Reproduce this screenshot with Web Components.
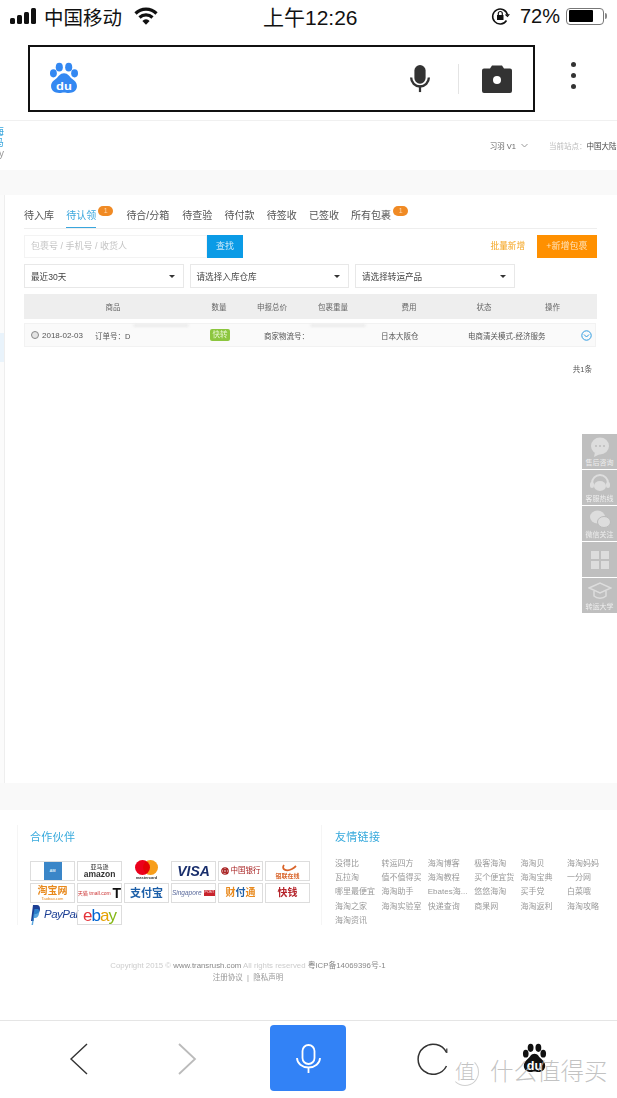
<!DOCTYPE html>
<html lang="zh">
<head>
<meta charset="utf-8">
<title>Transrush</title>
<style>
  html, body { margin: 0; padding: 0; background: #fff; }
  body {
    width: 617px;
    height: 1098px;
    overflow: hidden;
    position: relative;
    font-family: "Liberation Sans", "Noto Sans CJK SC", sans-serif;
    color: #333;
  }
</style>
</head>
<body>
<status-bar></status-bar>
<search-bar></search-bar>
<site-head></site-head>
<package-panel></package-panel>
<site-footer></site-footer>
<side-tools></side-tools>
<browser-bar></browser-bar>

<script>
const PAW = `
  <ellipse cx="8" cy="11" rx="2.9" ry="4"/>
  <ellipse cx="13" cy="5" rx="3" ry="4.2"/>
  <ellipse cx="21" cy="5" rx="3" ry="4.2"/>
  <ellipse cx="26" cy="11" rx="2.9" ry="4"/>
  <path d="M17 11c-3.600 0-4.500 3.300-6.800 5.300C8 18.200 6 20 6 23.500 6 27.500 9 30 13 30c1.700 0 2.800-.5 4-.5s2.300.5 4 .5c4 0 7-2.500 7-6.500 0-3.500-2-5.300-4.200-7.200C21.500 14.300 20.600 11 17 11z"/>`

class StatusBar extends HTMLElement {
  constructor() {
    super()
    this.attachShadow({ mode: 'open' })
    this.shadowRoot.innerHTML = `
      <style>
        :host { display: flex; align-items: center; height: 40px; padding: 0 10px 8px; color: #111; font-size: 20px; box-sizing: border-box; }
        .left, .right { flex: 1; display: flex; align-items: center; }
        .right { justify-content: flex-end; }
        .bars { display: flex; align-items: flex-end; gap: 2px; height: 16px; margin-right: 8px; }
        .bars i { width: 5px; border-radius: 1.500px; background: #111; }
        .carrier { font-size: 19.500px; margin-right: 12px; }
        .time { font-size: 21px; width: 94px; text-align: center; white-space: nowrap; }
        .pct { margin: 0 6px 0 10px; }
        .batt { width: 38px; height: 17px; border: 1.500px solid #777; border-radius: 4px; box-sizing: border-box; padding: 1.500px; }
        .batt i { display: block; width: 74%; height: 100%; background: #000; border-radius: 1px; }
        .nub { width: 2px; height: 6px; background: #888; margin-left: 1px; border-radius: 0 2px 2px 0; }
      </style>
      <div class="left">
        <div class="bars"><i style="height:6px"></i><i style="height:9px"></i><i style="height:12px"></i><i style="height:16px"></i></div>
        <span class="carrier">中国移动</span>
        <svg width="24" height="18" viewBox="0 0 24 18" fill="none" stroke="#111" stroke-width="3.200">
          <path d="M1.500 6.500a15 15 0 0 1 21 0"/><path d="M5.500 10.500a9.500 9.500 0 0 1 13 0"/>
          <path d="M12 17.800l-3.600-3.900a4.800 4.800 0 0 1 7.200 0z" fill="#111" stroke="none"/>
        </svg>
      </div>
      <div class="time">上午12:26</div>
      <div class="right" style="margin-left:-3px">
        <svg width="19" height="19" viewBox="0 0 19 19" fill="none" stroke="#111" stroke-width="1.500">
          <path d="M15.500 13.500A7.500 7.500 0 1 1 16.500 8"/><path d="M14.500 7.500l2 1.800 1.800-2.200" stroke-width="1.200"/>
          <rect x="6" y="8" width="6.500" height="5" fill="#111" stroke="none"/>
          <path d="M7.300 8V6.500a2 2 0 0 1 4 0V8" stroke-width="1.200"/>
        </svg>
        <span class="pct">72%</span>
        <div class="batt"><i></i></div>
        <div class="nub"></div>
      </div>`
  }
}

class SearchBar extends HTMLElement {
  constructor() {
    super()
    this.attachShadow({ mode: 'open' })
    this.shadowRoot.innerHTML = `
      <style>
        :host { display: flex; align-items: flex-start; height: 81px; padding: 5px 0 0 28px; box-sizing: border-box; border-bottom: 1px solid #f0f0f0; }
        .box { width: 507px; height: 67px; box-sizing: border-box; border: 2px solid #111; display: flex; align-items: center; padding: 0 21px 0 14px; }
        .paw { width: 40px; height: 33px; }
        .grow { flex: 1; }
        .sep { width: 1px; height: 30px; background: #e4e4e4; margin: 0 23px 0 27px; }
        .dots { display: flex; flex-direction: column; gap: 6px; margin: 17px 0 0 36px; }
        .dots i { width: 5px; height: 5px; border-radius: 50%; background: #333; }
      </style>
      <div class="box">
        <svg class="paw" viewBox="0 0 34 32" preserveAspectRatio="none" fill="#3388f2">${PAW}
          <text x="17" y="27" text-anchor="middle" font-size="11" font-weight="700" fill="#fff" font-family="Liberation Sans, sans-serif">du</text>
        </svg>
        <div class="grow"></div>
        <svg width="22" height="28" viewBox="0 0 22 30" fill="#333">
          <rect x="5" y="0" width="12" height="20" rx="6"/>
          <path d="M1.500 13.500a9.500 9.500 0 0 0 19 0" fill="none" stroke="#333" stroke-width="2.500"/>
          <rect x="9.800" y="22" width="2.400" height="7"/>
        </svg>
        <div class="sep"></div>
        <svg width="30" height="28" viewBox="0 0 30 28">
          <path d="M0 5.500q0-2 2-2h6l2-3h10l2 3h6q2 0 2 2V26q0 2-2 2H2q-2 0-2-2z" fill="#333"/>
          <circle cx="15" cy="15" r="4" fill="#fff"/>
        </svg>
      </div>
      <div class="dots"><i></i><i></i><i></i></div>`
  }
}

class SiteHead extends HTMLElement {
  constructor() {
    super()
    this.attachShadow({ mode: 'open' })
    this.shadowRoot.innerHTML = `
      <style>
        :host { display: flex; align-items: center; height: 49px; font-size: 7.500px; color: #666; filter: blur(.45px); }
        .logo { width: 4px; height: 36px; overflow: hidden; display: flex; flex-direction: column; align-items: flex-end; color: #3aa6dd; font-size: 10px; line-height: 11px; margin-top: -4px; }
        .user { margin-left: auto; display: flex; align-items: center; gap: 5px; margin-top: 0; }
        .site { margin-left: 21px; white-space: nowrap; width: 68px; }
        .site span { color: #bbb; }
        .site b { font-weight: 400; color: #444; }
        svg { display: block; }
      </style>
      <div class="logo"><span>海</span><span>马</span><span style="color:#999">y</span></div>
      <div class="user">习羽 V1
        <svg width="7" height="5" viewBox="0 0 7 5" fill="none" stroke="#999"><path d="M.500 1l3 3 3-3"/></svg>
      </div>
      <div class="site"><span>当前站点：</span><b>中国大陆</b></div>`
  }
}

class TabItem extends HTMLElement {
  constructor() {
    super()
    this.attachShadow({ mode: 'open' })
  }

  connectedCallback() {
    const badge = this.hasAttribute('badge')
    this.shadowRoot.innerHTML = `
      <style>
        :host { display: flex; align-items: flex-start; height: 33px; box-sizing: border-box; padding-top: 15px; font-size: 10px; line-height: 12px; color: #555; white-space: nowrap; }
        :host([active]) span.t { color: #3aa6dd; border-bottom: 1px solid #3aa6dd; height: 17px; }
        .b { width: 15px; height: 10px; border-radius: 5px; background: #f08a24; color: #ffd9b0; font-size: 7px; line-height: 10px; text-align: center; margin: -4px 0 0 2px; }
      </style>
      <span class="t"><slot></slot></span>${badge ? '<span class="b">1</span>' : ''}`
  }
}

class SelectBox extends HTMLElement {
  constructor() {
    super()
    this.attachShadow({ mode: 'open' })
    this.shadowRoot.innerHTML = `
      <style>
        :host { display: flex; align-items: center; justify-content: space-between; height: 24px; box-sizing: border-box; border: 1px solid #e8e8e8; padding: 0 8px 0 6px; font-size: 8.600px; color: #444; }
        i { border: 3px solid transparent; border-top: 3px solid #333; border-bottom: 0; }
      </style>
      <span><slot></slot></span><i></i>`
  }
}

class PackagePanel extends HTMLElement {
  constructor() {
    super()
    this.attachShadow({ mode: 'open' })
    this.shadowRoot.innerHTML = `
      <style>
        :host { display: flex; height: 640px; background: #f9f9f9; padding: 25px 0 27px; box-sizing: border-box; filter: blur(.45px); font-size: 7.500px; color: #666; }
        .gutter { width: 4px; background: #fbfbfb; border-right: 1px solid #eee; padding-top: 138px; }
        .gutter i { display: block; height: 29px; background: #e9f3fb; }
        .main { flex: 1; background: #fff; padding: 0 20px 0 19px; }
        .tabs { display: flex; gap: 12.200px; height: 33px; border-bottom: 1px solid #eee; }
        .tools { display: flex; align-items: stretch; height: 23px; margin-top: 6px; }
        .input { width: 183px; box-sizing: border-box; border: 1px solid #f3f3f3; color: #c4c4c4; font-size: 9px; line-height: 21px; padding-left: 6px; }
        .go { width: 36px; background: #0b9be6; color: #cdeafa; font-size: 9px; line-height: 23px; text-align: center; }
        .bulk { margin-left: auto; color: #f5a623; font-size: 8.600px; line-height: 23px; }
        .add { width: 60px; margin-left: 12px; background: #ff9000; color: #ffe2b8; font-size: 9px; line-height: 23px; text-align: center; }
        .filters { display: grid; grid-template-columns: 159.500px 159.500px 159.500px; gap: 6px; margin-top: 6px; }
        .thead, .trow { display: grid; grid-template-columns: 178px 34px 72px 50px 102px 48px 1fr; align-items: center; text-align: center; white-space: nowrap; }
        .thead { height: 25px; margin-top: 6px; background: #eee; color: #666; }
        .trow { position: relative; height: 24px; margin: 4px 1px 0 0; background: #fafafa; border: 1px solid #f2f2f2; box-sizing: border-box; color: #555; }
        .goods { display: flex; align-items: center; padding-left: 6px; text-align: left; font-size: 8px; }
        .clock { width: 8px; height: 8px; box-sizing: border-box; border: 1px solid #888; border-radius: 50%; margin-right: 3px; background: #e4e4e4; }
        .order { margin-left: 12px; font-size: 7.500px; }
        .tag { width: 20px; height: 12px; margin: 0 auto; border-radius: 2px; background: #8cc63f; color: #e8f7d2; font-size: 7.500px; line-height: 12px; }
        .mail { grid-column: 3 / 5; padding-left: 27px; text-align: left; }
        .wh { padding-left: 22px; text-align: left; }
        .svc { grid-column: 6 / 8; padding-left: 7px; text-align: left; }
        .chev { position: absolute; right: 3px; top: 6px; }
        .smear { position: absolute; top: 0; height: 3px; background: #ececec; border-radius: 2px; filter: blur(1px); }
        .total { text-align: right; padding: 16px 5px 0 0; color: #555; }
      </style>
      <div class="gutter"><i></i></div>
      <div class="main">
        <div class="tabs">
          <tab-item>待入库</tab-item>
          <tab-item active badge style="margin-right:1px">待认领</tab-item>
          <tab-item style="margin-right:1px">待合/分箱</tab-item>
          <tab-item>待查验</tab-item>
          <tab-item>待付款</tab-item>
          <tab-item>待签收</tab-item>
          <tab-item>已签收</tab-item>
          <tab-item badge>所有包裹</tab-item>
        </div>
        <div class="tools">
          <div class="input">包裹号 / 手机号 / 收货人</div>
          <div class="go">查找</div>
          <div class="bulk">批量新增</div>
          <div class="add">+新增包裹</div>
        </div>
        <div class="filters">
          <select-box>最近30天</select-box>
          <select-box>请选择入库仓库</select-box>
          <select-box>请选择转运产品</select-box>
        </div>
        <div class="thead">
          <span>商品</span><span>数量</span><span>申报总价</span><span>包裹重量</span><span>费用</span><span>状态</span><span>操作</span>
        </div>
        <div class="trow">
          <span class="smear" style="left:108px;width:56px"></span>
          <span class="smear" style="left:285px;width:56px"></span>
          <div class="goods"><i class="clock"></i>2018-02-03<span class="order">订单号：D</span></div>
          <div class="tag">快转</div>
          <div class="mail">商家物流号：</div>
          <div class="wh">日本大阪仓</div>
          <div class="svc">电商清关模式-经济服务</div>
          <svg class="chev" width="11" height="11" viewBox="0 0 11 11" fill="none" stroke="#2d9be0"><circle cx="5.500" cy="5.500" r="4.700"/><path d="M3 4.500l2.500 2.500L8 4.500"/></svg>
        </div>
        <div class="total">共1条</div>
      </div>`
  }
}

class PartnerLogo extends HTMLElement {
  constructor() {
    super()
    this.attachShadow({ mode: 'open' })
    this.shadowRoot.innerHTML = `
      <style>
        :host { display: flex; flex-direction: column; align-items: center; justify-content: center; height: 20px; box-sizing: border-box; border: 1px solid #ddd; overflow: hidden; white-space: nowrap; font-size: 9px; font-weight: 700; line-height: 1; }
        :host([plain]) { border-color: transparent; overflow: visible; }
        :host([row]) { flex-direction: row; gap: 2px; }
      </style>
      <slot></slot>`
  }
}

class SiteFooter extends HTMLElement {
  constructor() {
    super()
    this.attachShadow({ mode: 'open' })
    const links = ['没得比', '转运四方', '海淘博客', '极客海淘', '海淘贝', '海淘妈妈', '瓦拉淘', '值不值得买', '海淘教程', '买个便宜货', '海淘宝典', '一分网', '哪里最便宜', '海淘助手', 'Ebates海...', '悠悠海淘', '买手党', '白菜哦', '海淘之家', '海淘实验室', '快递查询', '商果网', '海淘返利', '海淘攻略', '海淘资讯']
    this.shadowRoot.innerHTML = `
      <style>
        :host { display: block; height: 210px; padding: 15px 0 0 17px; box-sizing: border-box; filter: blur(.45px); }
        .cols { display: flex; height: 100px; }
        .left { width: 304px; padding: 5px 0 0 12px; border-left: 1px solid #f5f5f5; box-sizing: border-box; }
        .right { padding: 5px 0 0 13px; border-left: 1px solid #f5f5f5; width: 280px; box-sizing: border-box; }
        h3 { margin: 0; font-size: 11px; font-weight: 400; line-height: 14px; color: #36a9dc; letter-spacing: .300px; }
        .logos { display: grid; grid-template-columns: repeat(6, 45px); grid-auto-rows: 20px; gap: 2px; margin-top: 17px; }
        .links { display: grid; grid-template-columns: repeat(6, 46.400px); grid-auto-rows: 14.200px; margin-top: 13px; font-size: 8px; line-height: 14px; color: #999; white-space: nowrap; }
        .copy { margin: 35px 0 0 -17px; text-align: center; font-size: 7.800px; line-height: 11.500px; color: #ccc; width: 496px; }
        .copy b { font-weight: 400; color: #888; }
        .copy div + div { color: #999; font-size: 7.500px; }
        .amex { width: 18px; height: 18px; background: #3a86c8; color: #dcecf8; font-size: 4px; line-height: 18px; text-align: center; }
        .mc { display: flex; margin-top: -2px; }
        .mc i { width: 15px; height: 15px; border-radius: 50%; background: #eb001b; }
        .mc i + i { background: #f79e1b; margin-left: -7px; mix-blend-mode: multiply; }
        .sub { font-size: 4px; font-weight: 400; margin-top: 1px; }
        .pp { display: flex; align-items: center; gap: 4px; font-size: 11.500px; font-style: italic; font-weight: 400; color: #1c3f94; letter-spacing: -.5px; }
        .pp svg { display: block; }
      </style>
      <div class="cols">
        <div class="left">
          <h3>合作伙伴</h3>
          <div class="logos">
            <partner-logo><span class="amex">AM</span></partner-logo>
            <partner-logo style="color:#333;font-size:8.500px"><span style="font-size:6px;font-weight:400">亚马逊</span>amazon</partner-logo>
            <partner-logo plain><span class="mc"><i></i><i></i></span><span class="sub" style="color:#333;font-weight:700">mastercard</span></partner-logo>
            <partner-logo style="color:#1a2f6c;font-size:14px;font-style:italic">VISA</partner-logo>
            <partner-logo row style="color:#a61c1c;font-size:7.500px;font-weight:400">
              <svg width="8" height="8" viewBox="0 0 8 8" fill="none" stroke="#a61c1c" stroke-width="1.300"><circle cx="4" cy="4" r="3.200"/><rect x="2.700" y="2.700" width="2.600" height="2.600"/></svg><span>中国银行</span>
            </partner-logo>
            <partner-logo style="color:#d9642a;font-size:6px">
              <svg width="22" height="9" viewBox="0 0 22 9" fill="none" stroke="#d9642a" stroke-width="1.800"><path d="M7 1c-3 4 2 7 8 4 2-1 3-2 4-3"/></svg><span>银联在线</span>
            </partner-logo>
            <partner-logo style="color:#e8891c;font-size:10px">淘宝网<span class="sub">Taobao.com</span></partner-logo>
            <partner-logo row style="color:#c33;font-size:5px;font-weight:400">天猫 tmall.com<b style="color:#111;font-size:14px">T</b></partner-logo>
            <partner-logo style="color:#1d5fa8;font-size:11px">支付宝</partner-logo>
            <partner-logo row style="color:#5a6a9c;font-size:6.500px;font-style:italic;font-weight:400">Singapore<span style="background:#c8232c;color:#fff;font-size:3.500px;padding:1px;font-style:normal">POST</span></partner-logo>
            <partner-logo style="color:#e8891c;font-size:10px"><span>财<span style="color:#1d5fa8">付</span>通</span></partner-logo>
            <partner-logo style="color:#b5232a;font-size:10px">快钱</partner-logo>
            <partner-logo plain style="align-items:flex-start">
              <span class="pp"><svg width="9" height="20" viewBox="0 0 9 20"><path d="M2 0h4q3 0 3 4t-4 5H3.500L2.500 16H0z" fill="#1c3f94"/><path d="M3.500 4h3.500q2 1 1 5t-4 4H3L2 20H.500z" fill="#2f8fd6" opacity=".8"/></svg>PayPal</span>
            </partner-logo>
            <partner-logo style="color:#e53238;font-size:17px;font-weight:400;flex-direction:row;letter-spacing:-1px"><span>e</span><span style="color:#0064d2">b</span><span style="color:#e5a100">a</span><span style="color:#86b817">y</span></partner-logo>
          </div>
        </div>
        <div class="right">
          <h3>友情链接</h3>
          <div class="links">${links.map((l) => `<span>${l}</span>`).join('')}</div>
        </div>
      </div>
      <div class="copy">
        <div>Copyright 2015 © <b>www.transrush.com</b> All rights reserved <b>粤ICP备14069396号-1</b></div>
        <div>注册协议 &nbsp;|&nbsp; 隐私声明</div>
      </div>`
  }
}

class SideTools extends HTMLElement {
  constructor() {
    super()
    this.attachShadow({ mode: 'open' })
    const items = [
      ['售后咨询', '<ellipse cx="12" cy="10" rx="9" ry="8.500" fill="#ddd"/><path d="M7 16l-1 5 6-3z" fill="#ddd"/><circle cx="8" cy="10" r="1" fill="#bbb"/><circle cx="12" cy="10" r="1" fill="#bbb"/><circle cx="16" cy="10" r="1" fill="#bbb"/>'],
      ['客服热线', '<path d="M4 11a8 8 0 0 1 16 0" fill="none" stroke="#ddd" stroke-width="2"/><rect x="2" y="10" width="4" height="6" rx="2" fill="#ddd"/><rect x="18" y="10" width="4" height="6" rx="2" fill="#ddd"/><ellipse cx="12" cy="14" rx="6" ry="5" fill="#ddd"/>'],
      ['微信关注', '<ellipse cx="9.500" cy="9" rx="7.500" ry="6.500" fill="#ddd"/><ellipse cx="16" cy="14" rx="6.500" ry="5.500" fill="#ddd" stroke="#bbb"/>'],
      ['', '<rect x="3" y="2" width="8" height="8" fill="#ddd"/><rect x="13" y="2" width="8" height="8" fill="#ddd"/><rect x="3" y="12" width="8" height="8" fill="#ddd"/><rect x="13" y="12" width="8" height="8" fill="#ddd"/>'],
      ['转运大学', '<path d="M1 8l11-5 11 5-11 5z" fill="none" stroke="#ddd" stroke-width="1.500"/><path d="M6 11v5c3 3 9 3 12 0v-5" fill="none" stroke="#ddd" stroke-width="1.500"/>']
    ]
    this.shadowRoot.innerHTML = `
      <style>
        :host { position: absolute; left: 582px; top: 434px; width: 35px; display: flex; flex-direction: column; gap: 1px; filter: blur(.6px); }
        .it { height: 35px; background: #bfbfbf; display: flex; flex-direction: column; align-items: center; justify-content: center; color: #eee; font-size: 7px; line-height: 9px; white-space: nowrap; overflow: hidden; }
        svg { display: block; }
      </style>
      ${items.map(([t, s]) => `<div class="it"><svg width="24" height="22" viewBox="0 0 24 22">${s}</svg>${t ? `<span>${t}</span>` : ''}</div>`).join('')}`
  }
}

class BrowserBar extends HTMLElement {
  constructor() {
    super()
    this.attachShadow({ mode: 'open' })
    this.shadowRoot.innerHTML = `
      <style>
        :host { position: absolute; left: 0; top: 1020px; width: 617px; height: 78px; box-sizing: border-box; border-top: 1px solid #e5e5e5; background: #fff; display: flex; align-items: flex-start; }
        svg { display: block; flex: none; }
        .mic { width: 76px; height: 66px; margin: 4px 0 0 73px; border-radius: 4px; background: #3282f6; display: flex; align-items: center; justify-content: center; }
        .mark { position: absolute; left: 451px; top: 36px; display: flex; align-items: center; gap: 11px; color: rgba(185,185,185,.85); font-size: 23.500px; line-height: 30px; white-space: nowrap; font-weight: 300; }
        .seal { width: 28px; height: 28px; box-sizing: border-box; border: 1px solid transparent; border-right-color: #d0d0d0; border-bottom-color: #d0d0d0; border-radius: 50%; font-size: 20px; line-height: 26px; text-align: center; }
      </style>
      <svg style="margin:22px 0 0 69px" width="20" height="32" viewBox="0 0 20 32" fill="none" stroke="#333" stroke-width="1.400"><path d="M18 1L2 16l16 15"/></svg>
      <svg style="margin:22px 0 0 88px" width="20" height="32" viewBox="0 0 20 32" fill="none" stroke="#bbb" stroke-width="1.800"><path d="M2 1l16 15L2 31"/></svg>
      <div class="mic">
        <svg width="25" height="29" viewBox="0 0 25 29" fill="none" stroke="#fff" stroke-width="1.800"><rect x="6.500" y="1" width="12" height="19" rx="6"/><path d="M1 14a11.500 9.500 0 0 0 23 0M12.500 24v5"/></svg>
      </div>
      <svg style="margin:22px 0 0 71px" width="31" height="32" viewBox="0 0 31 32" fill="none" stroke="#333" stroke-width="1.500"><path d="M29.500 9.500A15 15 0 1 0 29.500 23"/><path d="M29.800 5.500v4.500" stroke-width="1.200"/></svg>
      <svg style="margin:21px 0 0 70px" width="33" height="33" viewBox="0 0 34 32" fill="#111">${PAW}
        <text x="17" y="28" text-anchor="middle" font-size="13" font-weight="700" fill="#fff" font-family="Liberation Sans, sans-serif">du</text>
      </svg>
      <div class="mark"><span class="seal">值</span><span>什么值得买</span></div>`
  }
}

customElements.define('status-bar', StatusBar)
customElements.define('search-bar', SearchBar)
customElements.define('site-head', SiteHead)
customElements.define('tab-item', TabItem)
customElements.define('select-box', SelectBox)
customElements.define('package-panel', PackagePanel)
customElements.define('partner-logo', PartnerLogo)
customElements.define('site-footer', SiteFooter)
customElements.define('side-tools', SideTools)
customElements.define('browser-bar', BrowserBar)
</script>
</body>
</html>
